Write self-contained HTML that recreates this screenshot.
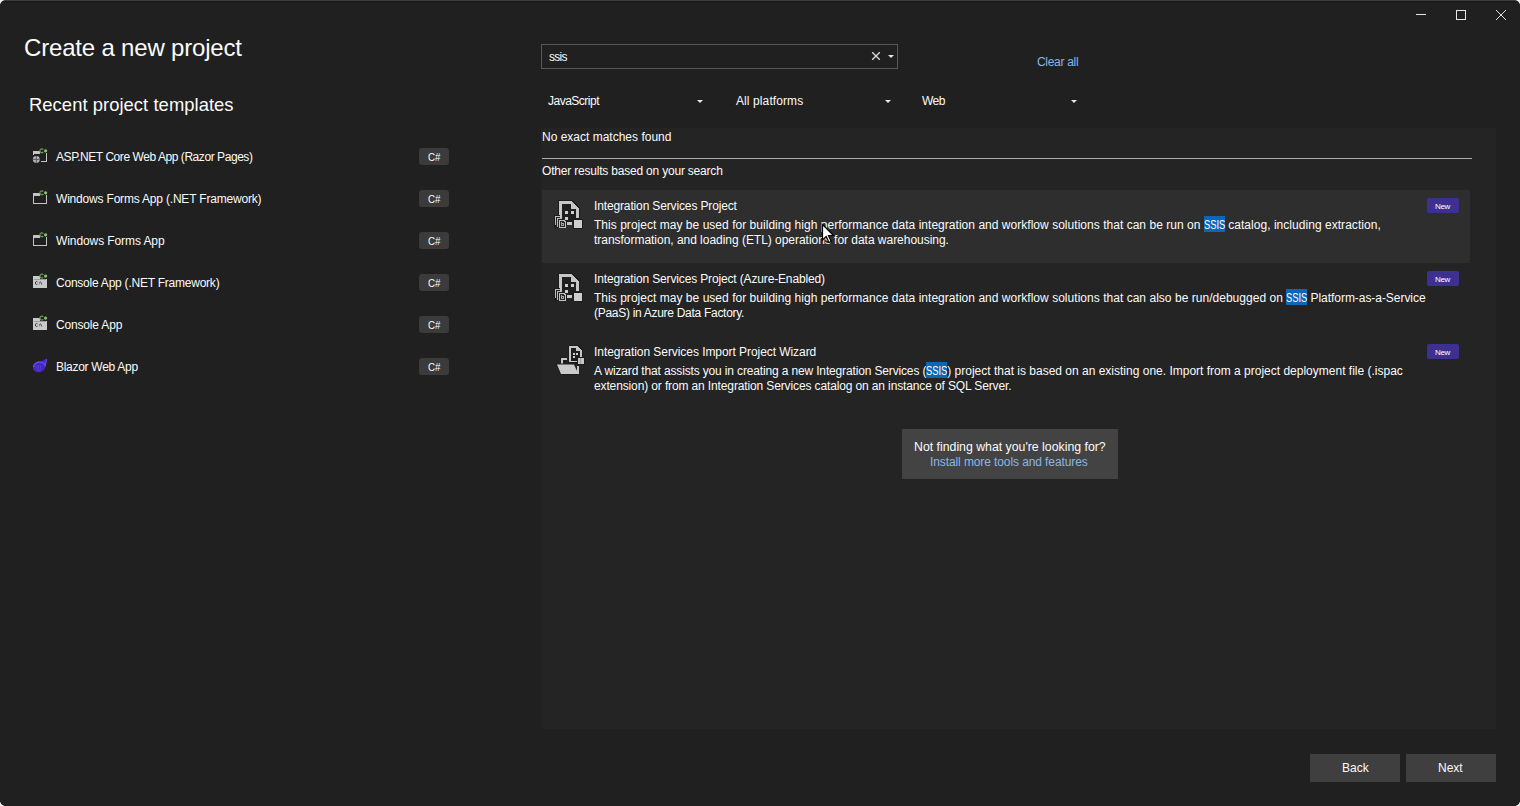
<!DOCTYPE html>
<html><head><meta charset="utf-8"><style>
html,body{margin:0;padding:0;}
body{width:1520px;height:806px;overflow:hidden;background:#202020;font-family:"Liberation Sans",sans-serif;color:#fbfbfb;position:relative;}
.a{position:absolute;}
.t{position:absolute;white-space:nowrap;line-height:1;}
.li{font-size:12px;left:56px;}
.cs{position:absolute;left:419px;width:30px;height:17px;background:#3b3b3b;border-radius:3px;}
.cs span{position:absolute;left:8.7px;top:4px;font-size:11px;line-height:1;transform:scaleX(0.88);transform-origin:0 0;}
.ico{position:absolute;left:32px;}
.dd{top:95px;font-size:12px;}
.arrow{position:absolute;width:0;height:0;border-left:3.3px solid transparent;border-right:3.3px solid transparent;border-top:3.7px solid #e6e6e6;}
.it{left:594px;font-size:12px;letter-spacing:-0.14px;}
.ds{position:absolute;left:594px;font-size:12px;line-height:15px;white-space:nowrap;}
.hlw{display:inline-block;position:relative;width:21px;height:16px;vertical-align:top;margin-top:-2px;background:#0d66b8;}
.hlw i{position:absolute;left:0;top:2px;font-style:normal;transform:scaleX(0.78);transform-origin:0 0;color:#fff;}
.new{position:absolute;left:1427px;width:32px;height:15px;background:#3c3190;border-radius:2px;}
.new span{position:absolute;left:8px;top:5px;font-size:8px;line-height:1;letter-spacing:-0.4px;color:#fff;}
.btn{position:absolute;top:754px;width:90px;height:28px;background:#3f3f3f;}
.btn span{position:absolute;top:8px;font-size:12px;line-height:1;}
.link{color:#8ab6e2;}
</style></head><body>
<div class="a" style="left:0;top:0;width:1520px;height:1px;background:#3c3c3c"></div>
<div class="a" style="left:0;top:1px;width:1520px;height:2px;background:#1b1b1b"></div>
<svg class="a" style="left:0;top:0" width="8" height="8"><path d="M0 0 H4.5 Q1 1 0 4.5 Z" fill="#f0f0f0"/></svg>
<svg class="a" style="left:1512px;top:0" width="8" height="8"><path d="M8 0 H3.5 Q7 1 8 4.5 Z" fill="#f0f0f0"/></svg>
<svg class="a" style="left:0;top:798px" width="8" height="8"><path d="M0 8 H4.5 Q1 7 0 3.5 Z" fill="#f0f0f0"/></svg>
<svg class="a" style="left:1512px;top:798px" width="8" height="8"><path d="M8 8 H3.5 Q7 7 8 3.5 Z" fill="#f0f0f0"/></svg>
<div class="a" style="left:1416px;top:14px;width:10px;height:1px;background:#e6e6e6"></div>
<div class="a" style="left:1456px;top:10px;width:8px;height:8px;border:1px solid #e6e6e6"></div>
<svg class="a" style="left:1495px;top:9px" width="12" height="12" viewBox="0 0 12 12"><path d="M1 1 L11 11 M11 1 L1 11" stroke="#e0e0e0" stroke-width="1"/></svg>
<div class="t" style="left:24px;top:36px;font-size:24px;letter-spacing:-0.18px">Create a new project</div>
<div class="t" style="left:29px;top:95.5px;font-size:18.4px;letter-spacing:0.05px">Recent project templates</div>
<svg class="ico" style="top:147px" width="16" height="16" viewBox="0 0 16 16"><g shape-rendering="crispEdges"><rect x="1" y="4" width="14" height="11" fill="#c4c4c4"/><rect x="2" y="7" width="12" height="7" fill="#202020"/><rect x="8" y="6" width="6" height="1" fill="#202020"/><rect x="0" y="8" width="9" height="8" fill="#202020"/><rect x="8" y="0" width="8" height="6" fill="#202020"/></g><circle cx="4.3" cy="12.4" r="3.4" fill="#b4b4b4"/><path d="M1 12.4 H7.6 M4.3 9 V15.8" stroke="#505050" stroke-width="0.9"/><g><path d="M11.3 2.6 A1.9 1.9 0 1 0 11.3 5.0" stroke="#5e9e4c" stroke-width="1.2" fill="none"/><circle cx="13.6" cy="3.8" r="1.6" fill="#8cbd7b"/></g></svg>
<div class="t li" style="top:151px;letter-spacing:-0.44px">ASP.NET Core Web App (Razor Pages)</div>
<div class="cs" style="top:148px"><span>C#</span></div>
<svg class="ico" style="top:189px" width="16" height="16" viewBox="0 0 16 16"><g shape-rendering="crispEdges"><rect x="1" y="4" width="14" height="11" fill="#c4c4c4"/><rect x="2" y="7" width="12" height="7" fill="#202020"/><rect x="8" y="6" width="6" height="1" fill="#202020"/><rect x="8" y="0" width="8" height="6" fill="#202020"/></g><g><path d="M11.3 2.6 A1.9 1.9 0 1 0 11.3 5.0" stroke="#5e9e4c" stroke-width="1.2" fill="none"/><circle cx="13.6" cy="3.8" r="1.6" fill="#8cbd7b"/></g></svg>
<div class="t li" style="top:193px;letter-spacing:-0.19px">Windows Forms App (.NET Framework)</div>
<div class="cs" style="top:190px"><span>C#</span></div>
<svg class="ico" style="top:231px" width="16" height="16" viewBox="0 0 16 16"><g shape-rendering="crispEdges"><rect x="1" y="4" width="14" height="11" fill="#c4c4c4"/><rect x="2" y="7" width="12" height="7" fill="#202020"/><rect x="8" y="6" width="6" height="1" fill="#202020"/><rect x="8" y="0" width="8" height="6" fill="#202020"/></g><g><path d="M11.3 2.6 A1.9 1.9 0 1 0 11.3 5.0" stroke="#5e9e4c" stroke-width="1.2" fill="none"/><circle cx="13.6" cy="3.8" r="1.6" fill="#8cbd7b"/></g></svg>
<div class="t li" style="top:235px;letter-spacing:-0.09px">Windows Forms App</div>
<div class="cs" style="top:232px"><span>C#</span></div>
<svg class="ico" style="top:273px" width="16" height="16" viewBox="0 0 16 16"><g shape-rendering="crispEdges"><rect x="1" y="3" width="14" height="12" fill="#cacaca"/><rect x="2" y="6" width="12" height="1" fill="#9c9c9c"/><rect x="8" y="0" width="8" height="6" fill="#202020"/></g><path d="M5.5 8.9 A1.3 1.5 0 1 0 5.5 11.1" stroke="#3c3c3c" stroke-width="1" fill="none"/><path d="M6.9 9.4 h0.8 M6.9 10.9 h0.8 M8.5 8.5 L9.8 11.5" stroke="#3c3c3c" stroke-width="0.9"/><g><path d="M11.3 1.9 A1.9 1.9 0 1 0 11.3 4.3" stroke="#5e9e4c" stroke-width="1.2" fill="none"/><circle cx="13.6" cy="3.1" r="1.6" fill="#8cbd7b"/></g></svg>
<div class="t li" style="top:277px;letter-spacing:-0.23px">Console App (.NET Framework)</div>
<div class="cs" style="top:274px"><span>C#</span></div>
<svg class="ico" style="top:315px" width="16" height="16" viewBox="0 0 16 16"><g shape-rendering="crispEdges"><rect x="1" y="3" width="14" height="12" fill="#cacaca"/><rect x="2" y="6" width="12" height="1" fill="#9c9c9c"/><rect x="8" y="0" width="8" height="6" fill="#202020"/></g><path d="M5.5 8.9 A1.3 1.5 0 1 0 5.5 11.1" stroke="#3c3c3c" stroke-width="1" fill="none"/><path d="M6.9 9.4 h0.8 M6.9 10.9 h0.8 M8.5 8.5 L9.8 11.5" stroke="#3c3c3c" stroke-width="0.9"/><g><path d="M11.3 1.9 A1.9 1.9 0 1 0 11.3 4.3" stroke="#5e9e4c" stroke-width="1.2" fill="none"/><circle cx="13.6" cy="3.1" r="1.6" fill="#8cbd7b"/></g></svg>
<div class="t li" style="top:319px;letter-spacing:-0.17px">Console App</div>
<div class="cs" style="top:316px"><span>C#</span></div>
<svg class="ico" style="top:357px" width="16" height="16" viewBox="0 0 16 16"><path d="M15 1.6 C12.4 2.4 10.8 3.4 9.8 4.4 C5.2 3.6 0.8 6.2 0.8 10.2 C0.8 13.8 4.4 15.8 8 15.2 C11.6 14.6 13.4 11.6 13.8 8.6 C14.2 6.2 14.8 3.8 15 1.6 Z" fill="#4427c2"/><path d="M1.6 10.2 C1.6 7 4.6 5 8.4 5.2 C11.4 5.4 13.4 7 13.2 9.4" stroke="#6a4fe6" stroke-width="1.3" fill="none"/><path d="M14.6 2.2 C14.2 4.6 13.6 6.6 13.2 8.8" stroke="#6448e0" stroke-width="1.2" fill="none"/><path d="M4.2 8.6 V12.2 M6.4 8 V12.6 M8.6 8.6 V12.2 M4.4 13.2 H8.4" stroke="#5a3fd8" stroke-width="0.9" fill="none"/></svg>
<div class="t li" style="top:361px;letter-spacing:-0.29px">Blazor Web App</div>
<div class="cs" style="top:358px"><span>C#</span></div>
<div class="a" style="left:541px;top:44px;width:355px;height:23px;border:1px solid #575757"></div>
<div class="t" style="left:549px;top:51px;font-size:12px;letter-spacing:-0.7px">ssis</div>
<svg class="a" style="left:871px;top:51px" width="10" height="10" viewBox="0 0 10 10"><path d="M1.2 1.2 L8.8 8.8 M8.8 1.2 L1.2 8.8" stroke="#dedede" stroke-width="1.3"/></svg>
<div class="arrow" style="left:888px;top:55px"></div>
<div class="t link" style="left:1037px;top:56px;font-size:12px;letter-spacing:-0.3px">Clear all</div>
<div class="t dd" style="left:548px;letter-spacing:-0.5px">JavaScript</div>
<div class="arrow" style="left:697px;top:100px"></div>
<div class="t dd" style="left:736px;letter-spacing:0.1px">All platforms</div>
<div class="arrow" style="left:885px;top:100px"></div>
<div class="t dd" style="left:922px;letter-spacing:-0.5px">Web</div>
<div class="arrow" style="left:1071px;top:100px"></div>
<div class="a" style="left:541px;top:128px;width:955px;height:601px;background:#242424"></div>
<div class="t" style="left:542px;top:131px;font-size:12px">No exact matches found</div>
<div class="a" style="left:542px;top:158px;width:930px;height:1px;background:#ababab"></div>
<div class="t" style="left:542px;top:165px;font-size:12px;letter-spacing:-0.2px">Other results based on your search</div>
<div class="a" style="left:542px;top:190px;width:928px;height:73px;background:#2e2e2e"></div>
<svg class="a" style="left:552px;top:196px" width="36" height="36" viewBox="0 0 36 36" shape-rendering="crispEdges">
<path d="M6 4 H20 L28 12 V23 H6 Z" fill="#1c1c1c"/>
<path d="M7 5 H19.5 L27 12.5 V22 H7 Z" fill="#c6c6c6"/>
<path d="M10 8 H19 V13 H24 V24 H10 Z" fill="#1e1e1e"/>
<rect x="13" y="15" width="3" height="3" fill="#cdcdcd"/><rect x="19" y="15" width="3" height="3" fill="#cdcdcd"/>
<path d="M2 19 H8 V23 H14 V32 H2 Z" fill="#1e1e1e"/>
<rect x="13" y="21" width="3" height="3" fill="#cdcdcd"/>
<path d="M3 20 h5 v1 h-4 v8 h-1 Z" fill="#bcbcbc"/>
<path d="M5 22 h5 v1 h-4 v8 h-1 Z" fill="#bcbcbc"/>
<path d="M7 24 h5 l2 2 v6 h-7 Z" fill="#c2c2c2"/><path d="M8 25 h3.5 l1.5 1.5 v4.5 h-5 Z" fill="#262626"/><path d="M9 26 h1 v1 h2 v3 h-3 Z" fill="#a8a8a8"/><rect x="10" y="28" width="1" height="1" fill="#262626"/>
<rect x="14" y="24" width="8" height="5" fill="#1c1c1c"/>
<rect x="15" y="26" width="5" height="3" fill="#c6c6c6"/>
<rect x="21" y="23" width="10" height="10" fill="#1c1c1c"/>
<rect x="22" y="24" width="8" height="8" fill="#cdcdcd"/>
</svg>
<div class="t it" style="top:200px;letter-spacing:-0.14px">Integration Services Project</div>
<div class="ds" style="top:218px"><span style="letter-spacing:0.03px">This project may be used for building high performance data integration and workflow solutions that can be run on </span><span class="hlw"><i>SSIS</i></span><span style="letter-spacing:0.04px"> catalog, including extraction,</span><br><span style="letter-spacing:-0.03px">transformation, and loading (ETL) operations for data warehousing.</span></div>
<div class="new" style="top:198px"><span>New</span></div>
<svg class="a" style="left:552px;top:269px" width="36" height="36" viewBox="0 0 36 36" shape-rendering="crispEdges">
<path d="M6 4 H20 L28 12 V23 H6 Z" fill="#1c1c1c"/>
<path d="M7 5 H19.5 L27 12.5 V22 H7 Z" fill="#c6c6c6"/>
<path d="M10 8 H19 V13 H24 V24 H10 Z" fill="#1e1e1e"/>
<rect x="13" y="15" width="3" height="3" fill="#cdcdcd"/><rect x="19" y="15" width="3" height="3" fill="#cdcdcd"/>
<path d="M2 19 H8 V23 H14 V32 H2 Z" fill="#1e1e1e"/>
<rect x="13" y="21" width="3" height="3" fill="#cdcdcd"/>
<path d="M3 20 h5 v1 h-4 v8 h-1 Z" fill="#bcbcbc"/>
<path d="M5 22 h5 v1 h-4 v8 h-1 Z" fill="#bcbcbc"/>
<path d="M7 24 h5 l2 2 v6 h-7 Z" fill="#c2c2c2"/><path d="M8 25 h3.5 l1.5 1.5 v4.5 h-5 Z" fill="#262626"/><path d="M9 26 h1 v1 h2 v3 h-3 Z" fill="#a8a8a8"/><rect x="10" y="28" width="1" height="1" fill="#262626"/>
<rect x="14" y="24" width="8" height="5" fill="#1c1c1c"/>
<rect x="15" y="26" width="5" height="3" fill="#c6c6c6"/>
<rect x="21" y="23" width="10" height="10" fill="#1c1c1c"/>
<rect x="22" y="24" width="8" height="8" fill="#cdcdcd"/>
</svg>
<div class="t it" style="top:273px;letter-spacing:-0.15px">Integration Services Project (Azure-Enabled)</div>
<div class="ds" style="top:291px"><span style="letter-spacing:0.03px">This project may be used for building high performance data integration and workflow solutions that can also be run/debugged on </span><span class="hlw"><i>SSIS</i></span><span style="letter-spacing:-0.05px"> Platform-as-a-Service</span><br><span style="letter-spacing:-0.29px">(PaaS) in Azure Data Factory.</span></div>
<div class="new" style="top:271px"><span>New</span></div>
<svg class="a" style="left:552px;top:342px" width="36" height="36" viewBox="0 0 36 36" shape-rendering="crispEdges">
<path d="M16 3 H26 L31 8 V22 H16 Z" fill="#1c1c1c"/>
<path d="M17 4 H25 L30 9 V20 H17 Z" fill="#c6c6c6"/>
<path d="M19 6 H24 V9 H28 V19 H19 Z" fill="#1e1e1e"/>
<rect x="21" y="11" width="2" height="2" fill="#cdcdcd"/><rect x="24" y="11" width="2" height="2" fill="#cdcdcd"/><rect x="21" y="14" width="2" height="2" fill="#cdcdcd"/>
<rect x="25" y="15" width="8" height="8" fill="#1c1c1c"/>
<rect x="26" y="16" width="6" height="6" fill="#c6c6c6"/><rect x="28" y="16" width="1" height="6" fill="#a0a0a0"/>
<path d="M8 15 H15 V21 H8 Z" fill="#1c1c1c"/>
<path d="M9 16 H15 V18 H11 V22 H9 Z" fill="#c6c6c6"/>
<g shape-rendering="geometricPrecision"><path d="M4 21.5 H23 L26.5 30 V33 H8 Z" fill="#1c1c1c"/>
<path d="M5 22.5 H22 L25.5 30 V32 H9 Z" fill="#cacaca"/></g>
<rect x="25" y="24" width="2" height="8" fill="#c6c6c6"/>
</svg>
<div class="t it" style="top:346px;letter-spacing:-0.06px">Integration Services Import Project Wizard</div>
<div class="ds" style="top:364px"><span style="letter-spacing:-0.15px">A wizard that assists you in creating a new Integration Services (</span><span class="hlw"><i>SSIS</i></span><span style="letter-spacing:0.0px">) project that is based on an existing one. Import from a project deployment file (.ispac</span><br><span style="letter-spacing:-0.13px">extension) or from an Integration Services catalog on an instance of SQL Server.</span></div>
<div class="new" style="top:344px"><span>New</span></div>
<svg class="a" style="left:821px;top:223px" width="14" height="21" viewBox="0 0 14 21"><path d="M1.5 1.5 V17 L5.2 13.4 L8 19.5 L10.2 18.5 L7.5 12.5 H12.5 Z" fill="#fff" stroke="#000" stroke-width="1.2"/></svg>
<div class="a" style="left:902px;top:429px;width:216px;height:50px;background:#434343"></div>
<div class="t" style="left:914px;top:441px;font-size:12.3px">Not finding what you're looking for?</div>
<div class="t link" style="left:930px;top:456px;font-size:12px;letter-spacing:-0.1px">Install more tools and features</div>
<div class="btn" style="left:1310px"><span style="left:32px">Back</span></div>
<div class="btn" style="left:1406px"><span style="left:32px">Next</span></div>
</body></html>
